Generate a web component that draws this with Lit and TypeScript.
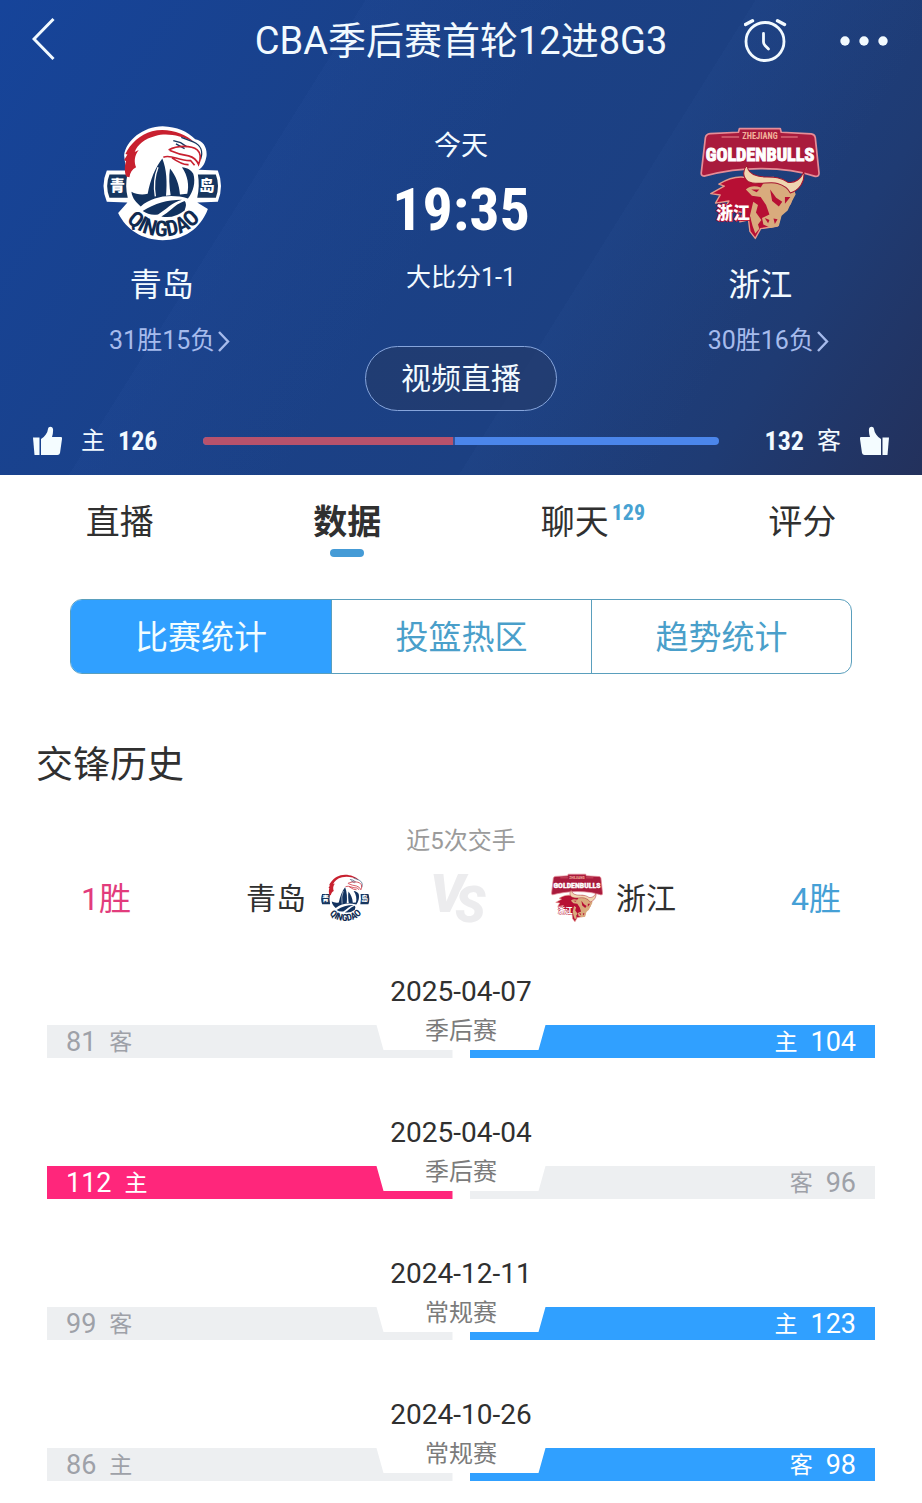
import { LitElement, html, svg, css, nothing } from "lit";
import { customElement, property, state } from "lit/decorators.js";
import { classMap } from "lit/directives/class-map.js";

type Team = "qingdao" | "zhejiang";

interface Meeting {
  date: string;
  stage: string;
  left: number;
  right: number;
  leftHome: boolean;
}

const MEETINGS: Meeting[] = [
  { date: "2025-04-07", stage: "季后赛", left: 81, right: 104, leftHome: false },
  { date: "2025-04-04", stage: "季后赛", left: 112, right: 96, leftHome: true },
  { date: "2024-12-11", stage: "常规赛", left: 99, right: 123, leftHome: false },
  { date: "2024-10-26", stage: "常规赛", left: 86, right: 98, leftHome: true },
];

@customElement("team-logo")
export class TeamLogo extends LitElement {
  @property() team: Team = "qingdao";

  static styles = css`
    :host { display: block; }
    svg { display: block; width: 100%; height: 100%; }
    .cjk { font-family: "Noto Sans CJK SC", sans-serif; font-weight: 900; }
    .latin { font-family: "Roboto Condensed", "Liberation Sans Narrow", Roboto, sans-serif; font-weight: 700; }
  `;

  private qingdao() {
    return svg`
      <defs><path id="banner" d="M90 296 Q134 364 218 366 Q304 364 350 290"/></defs>
      <path fill="#fff" d="M102 122 C108 78 158 36 218 35 C262 37 292 50 316 74 C342 80 352 100 350 124 C346 146 340 156 326 166 L384 168 Q403 214 384 262 L322 264 L354 284 C332 344 280 378 218 378 C156 376 110 348 84 296 L112 264 L50 262 Q30 214 50 168 L108 168 Z"/>
      <path fill="#17365f" d="M58 180 H112 Q104 214 113 250 H58 Q44 214 58 180 Z M324 180 H378 Q391 214 378 250 H322 Q330 214 324 180 Z"/>
      <text class="cjk" x="59" y="231" font-size="46" fill="#fff">青</text>
      <text class="cjk" x="328" y="231" font-size="46" fill="#fff">岛</text>
      <path fill="#c8202f" d="M108 186 C102 168 104 150 108 140 L102 136 L112 120 L106 118 C120 88 150 60 186 50 C232 38 286 56 312 82 C270 62 230 54 196 64 C164 72 142 90 134 112 L146 106 C132 124 132 142 138 158 C126 164 120 174 118 188 Z"/>
      <path fill="#fff" d="M146 124 C154 84 202 62 254 74 L286 92 L246 82 L268 104 C226 100 196 110 188 150 Z"/>
      <path fill="none" stroke="#17365f" stroke-width="4" d="M250 78 L272 84 L290 96 M258 88 L284 102 M274 68 L310 82 C334 92 340 112 332 134"/>
      <path fill="none" stroke="#c8202f" stroke-width="5" d="M236 106 C262 92 304 92 322 106 Q338 120 326 150 Q318 130 296 124 Q266 120 240 108 M220 128 C244 118 268 140 302 138 L314 152 M246 130 Q278 152 296 150"/>
      <path fill="#fff" d="M122 206 C126 176 142 156 164 144 L198 160 L280 162 C302 170 314 190 314 210 L306 250 L130 250 Z"/>
      <path fill="#12325f" d="M217 132 C196 158 181 196 173 238 C157 242 138 240 124 232 C126 252 140 266 152 276 C190 244 244 238 294 252 C310 234 318 202 310 178 C304 166 292 160 276 158 C294 184 298 212 292 238 L270 240 C268 210 258 184 240 162 C236 186 238 216 242 242 L228 244 C232 206 230 164 217 132 Z"/>
      <path fill="none" stroke="#fff" stroke-width="4" d="M204 158 Q188 198 196 246"/>
      <path fill="#12325f" d="M158 290 C196 266 230 256 276 256 C246 264 228 286 204 300 Q178 304 158 290 Z M284 260 Q292 268 284 288 Q252 314 214 306 C238 296 250 272 284 260 Z"/>
      <text class="latin" font-size="66" fill="#102a50"><textPath href="#banner" startOffset="50%" text-anchor="middle">QINGDAO</textPath></text>`;
  }

  private zhejiang() {
    return svg`
      <path fill="#a91b3d" stroke="#e58d97" stroke-width="5" stroke-linejoin="round" d="M44 182 Q34 182 36 170 L48 68 Q50 57 62 56 L146 52 L149 41 H270 L273 52 L362 57 Q372 58 374 68 L385 172 Q386 184 374 183 C330 168 270 160 212 160 C150 160 90 170 44 182 Z"/>
      <path stroke="#f08a8f" stroke-width="3" d="M96 66 H148 M272 66 H322"/>
      <text class="latin" x="210" y="73" font-size="25" fill="#f3b39b" text-anchor="middle">ZHEJIANG</text>
      <text class="latin" x="210" y="136" font-size="54" fill="#fff" stroke="#fff" stroke-width="3" text-anchor="middle">GOLDENBULLS</text>
      <path fill="#b70f34" stroke="#e79a8b" stroke-width="4" stroke-linejoin="round" d="M184 190 C150 178 120 186 88 206 L104 212 L64 234 L92 238 L78 262 L118 256 L104 280 L160 290 L150 318 L176 312 L180 346 L196 367 L212 338 L262 330 L274 288 L300 264 L312 224 L250 186 Z"/>
      <path fill="#d9ab7d" d="M168 222 Q186 206 212 216 L222 200 L262 194 C290 202 310 214 316 236 L302 262 L292 284 L274 300 L266 330 L242 336 L220 326 L216 306 L238 296 L228 268 L212 244 L186 240 Z M190 258 L204 268 L198 290 L214 312 L204 326 L208 338 L196 352 L188 330 L180 300 Z"/>
      <path fill="#b70f34" d="M184 222 L208 222 L200 230 Z M240 222 L258 246 L276 258 L266 272 L246 256 Z M284 244 L300 244 L284 264 Z M224 306 L238 312 L234 322 Z M250 308 L262 310 L254 324 Z"/>
      <path fill="#f0d5b0" stroke="#a4142f" stroke-width="3" stroke-linejoin="round" d="M172 148 C160 162 156 184 174 198 C200 212 240 196 262 204 Q290 212 300 232 C326 224 344 200 340 168 C332 192 312 204 292 200 C264 178 226 188 204 182 C184 178 172 166 172 148 Z"/>
      <text class="cjk" x="80" y="309" font-size="50" fill="#fff" stroke="#b70f34" stroke-width="5" paint-order="stroke">浙江</text>`;
  }

  render() {
    const isQingdao = this.team === "qingdao";
    return html`<svg role="img" aria-label=${isQingdao ? "青岛队徽" : "浙江队徽"}
      viewBox=${isQingdao ? "36 34 360 346" : "32 38 356 332"}>
      ${isQingdao ? this.qingdao() : this.zhejiang()}
    </svg>`;
  }
}

@customElement("team-summary")
export class TeamSummary extends LitElement {
  @property() team: Team = "qingdao";
  @property() name = "";
  @property() record = "";

  static styles = css`
    :host { display: flex; flex-direction: column; align-items: center; }
    .logo { width: 120px; height: 115px; }
    .name { margin-top: 22px; font-size: 32px; line-height: 44px; color: #f2faff; }
    .record {
      margin: 18px 0 0 16px; display: flex; align-items: center; gap: 2px;
      font-size: 25px; line-height: 32px; color: #a6bbec; text-decoration: none;
    }
    .arrow { display: block; width: 13px; height: 22px; }
  `;

  render() {
    return html`
      <team-logo class="logo" .team=${this.team}></team-logo>
      <div class="name">${this.name}</div>
      <a class="record" href="#record">${this.record}<svg class="arrow" viewBox="0 0 13 22" fill="none" stroke="currentColor" stroke-width="2.4" aria-hidden="true"><path d="M2 2 L11 11.500 L2 21"/></svg></a>
    `;
  }
}

@customElement("meeting-row")
export class MeetingRow extends LitElement {
  @property({ attribute: false }) meeting!: Meeting;

  static styles = css`
    :host {
      display: grid;
      grid-template-columns: 1fr 1fr;
      grid-template-rows: 40px 38px 8px;
      column-gap: 17px;
    }
    .date, .stage { grid-column: 1 / -1; text-align: center; }
    .date { grid-row: 1; font-size: 28px; line-height: 40px; color: #303030; }
    .stage { grid-row: 2; font-size: 24px; line-height: 38px; color: #7b7b7b; }
    .bar {
      grid-row: 2 / 4; align-self: end; height: 33px; box-sizing: border-box;
      display: flex; align-items: center; gap: 13px; padding: 2px 19px 0;
      background: #edeff1; color: #9ea1a8; font-size: 27px; line-height: 31px;
    }
    .left {
      grid-column: 1;
      clip-path: polygon(0 0, calc(100% - 76px) 0, calc(100% - 69px) 25px, 100% 25px, 100% 100%, 0 100%);
    }
    .right {
      grid-column: 2; flex-direction: row-reverse;
      clip-path: polygon(76px 0, 100% 0, 100% 100%, 0 100%, 0 25px, 69px 25px);
    }
    .side { font-size: 23px; }
    .left.win { background: #ff267b; color: #fff; }
    .right.win { background: #30a0ff; color: #fff; }
  `;

  render() {
    const m = this.meeting;
    return html`
      <div class="date">${m.date}</div>
      <div class=${classMap({ bar: true, left: true, win: m.left > m.right })}>
        <span>${m.left}</span><span class="side">${m.leftHome ? "主" : "客"}</span>
      </div>
      <div class=${classMap({ bar: true, right: true, win: m.right > m.left })}>
        <span>${m.right}</span><span class="side">${m.leftHome ? "客" : "主"}</span>
      </div>
      <div class="stage">${m.stage}</div>
    `;
  }
}

@customElement("app-root")
export class AppRoot extends LitElement {
  @state() private tab = 1;
  @state() private view = 0;

  private homeVotes = 126;
  private awayVotes = 132;

  static styles = css`
    :host {
      display: block; min-height: 100vh; background: #fff; color: #303030;
      font-family: Roboto, "Noto Sans CJK SC", sans-serif;
    }
    button { font: inherit; color: inherit; background: none; border: 0; padding: 0; cursor: pointer; }
    svg { display: block; }

    .hero {
      padding-bottom: 18px; color: #f2faff;
      background:
        linear-gradient(122deg, transparent 30%, rgba(50, 90, 170, 0.1) 30%, transparent 48%),
        linear-gradient(122deg, transparent 62%, rgba(50, 90, 160, 0.1) 62%, transparent 78%),
        linear-gradient(122deg, #16449a 0%, #1a4189 35%, #1c4082 62%, #1f3b73 82%, #23315c 100%);
    }
    .nav {
      display: grid; grid-template-columns: 1fr auto 1fr; align-items: center;
      height: 81px; padding: 0 32px;
    }
    .title { margin: 0; font-size: 38px; font-weight: 400; line-height: 52px; }
    .actions { display: flex; justify-content: flex-end; align-items: center; gap: 52px; }

    .match { display: grid; grid-template-columns: repeat(3, 1fr); padding: 0 12px; }
    .team { padding-top: 45px; }
    .center { display: flex; flex-direction: column; align-items: center; padding-top: 47px; }
    .day { font-size: 27px; line-height: 36px; }
    .time {
      margin-top: 14px; font-size: 60px; line-height: 64px; font-weight: 700; color: #fff;
      font-family: "Roboto Condensed", "Liberation Sans Narrow", Roboto, sans-serif;
    }
    .series { margin-top: 18px; font-size: 25px; line-height: 36px; }
    .live {
      margin-top: 50px; height: 65px; padding: 0 35px; box-sizing: border-box;
      border: 1px solid #86a5dc; border-radius: 33px; background: rgba(36, 58, 104, 0.6);
      font-size: 30px; line-height: 44px;
    }

    .votes { display: flex; align-items: center; height: 32px; margin-top: 14px; padding: 0 33px; }
    .vote { display: flex; align-items: center; font-size: 24px; line-height: 32px; }
    .vote .side { margin: 0 13px 0 19px; }
    .vote.away .side { margin: 0 19px 0 13px; }
    .count {
      font-size: 26px; font-weight: 700;
      font-family: "Roboto Condensed", "Liberation Sans Narrow", Roboto, sans-serif;
    }
    .meter {
      flex: 1; display: flex; height: 8px; margin: 0 46px; border-radius: 5px; overflow: hidden;
      background: #4b86eb;
    }
    .home-part { background: #b7526c; border-right: 2px solid #33559d; box-sizing: border-box; }

    .tabs { display: grid; grid-template-columns: repeat(4, 1fr); padding: 22px 6px 0; }
    .tab { display: flex; flex-direction: column; align-items: center; font-size: 34px; line-height: 50px; }
    .label { position: relative; }
    .badge {
      position: absolute; left: calc(100% + 3px); top: 0;
      font-size: 22px; line-height: 32px; font-weight: 700; color: #47a2d2;
      font-family: "Roboto Condensed", "Liberation Sans Narrow", Roboto, sans-serif;
    }
    .mark { width: 34px; height: 8px; margin-top: 2px; border-radius: 4px; }
    .tab.active { font-weight: 700; }
    .tab.active .mark { background: #459bd6; }

    .segments {
      display: grid; grid-template-columns: repeat(3, 1fr); height: 75px;
      margin: 42px 70px 0; box-sizing: border-box; border: 1px solid #5a9fbd;
      border-radius: 12px; overflow: hidden;
    }
    .segment { padding-top: 2px; font-size: 33px; line-height: 48px; color: #4a9fca; }
    .segment + .segment { border-left: 1px solid #5a9fbd; }
    .segment.active { background: #30a0ff; color: #f2fdff; }

    .heading { margin: 68px 36px 0; font-size: 37px; line-height: 48px; font-weight: 400; }
    .recent { margin-top: 34px; text-align: center; font-size: 24px; line-height: 34px; color: #9b9b9b; }
    .compare {
      display: grid; grid-template-columns: 1fr auto 180px auto 1fr; grid-template-rows: 52px;
      align-items: center; margin-top: 14px; padding: 0 81px;
    }
    .wins { padding-top: 2px; font-size: 32px; line-height: 44px; color: #e23c7c; }
    .wins.away { color: #45a0d6; text-align: right; }
    .club { display: flex; align-items: center; gap: 13px; font-size: 30px; line-height: 44px; }
    .club-name { padding-top: 2px; }
    .club-logo { width: 52px; height: 50px; }
    .versus { justify-self: center; font-family: Roboto, sans-serif; font-weight: 900; font-style: italic; }

    .history {
      display: flex; flex-direction: column; gap: 55px;
      margin: 48px 0 0; padding: 0 47px 23px;
    }
  `;

  private thumb(mirrored: boolean) {
    return html`<svg width="29" height="30" viewBox="0 0 29 30" fill="#f4fcff" aria-hidden="true">
      <g transform=${mirrored ? "matrix(-1 0 0 1 29 0)" : "matrix(1 0 0 1 0 0)"}>
        <path d="M0 11.500 H6.500 V29 H1.500 Z"/>
        <path d="M8 13 C12 10.500 14.500 7 15 3 C15.300 0 19.500 0 20 3 C20.300 6 19.800 8.500 19 11 H28 Q29.300 11 29 13 L27 27 Q26.500 29 24.500 29 H8 Z"/>
      </g></svg>`;
  }

  render() {
    const share = (this.homeVotes / (this.homeVotes + this.awayVotes)) * 100;
    return html`
      <header class="hero">
        <div class="nav">
          <div>
            <button aria-label="返回">
              <svg width="24" height="44" viewBox="0 0 24 44" fill="none" stroke="#f2faff" stroke-width="3" aria-hidden="true"><path d="M21.500 2 L2 22 L21.500 42"/></svg>
            </button>
          </div>
          <h1 class="title">CBA季后赛首轮12进8G3</h1>
          <div class="actions">
            <button aria-label="提醒">
              <svg width="44" height="44" viewBox="0 0 44 44" fill="none" stroke="#f2faff" stroke-width="2.800" stroke-linecap="round" aria-hidden="true">
                <circle cx="21" cy="22.500" r="19"/><path d="M19.500 14.500 V23 Q19.500 25 21 26.500 L24.500 30"/>
                <path stroke-width="3.400" d="M1.500 5.500 L8.500 1.800 M40.500 5.500 L33.500 1.800"/>
              </svg>
            </button>
            <button aria-label="更多">
              <svg width="50" height="44" viewBox="0 0 50 44" fill="#f2faff" aria-hidden="true"><circle cx="5" cy="22" r="4.700"/><circle cx="24" cy="22" r="4.700"/><circle cx="43" cy="22" r="4.700"/></svg>
            </button>
          </div>
        </div>

        <div class="match">
          <team-summary class="team" team="qingdao" name="青岛" record="31胜15负"></team-summary>
          <div class="center">
            <div class="day">今天</div>
            <div class="time">19:35</div>
            <div class="series">大比分1-1</div>
            <button class="live">视频直播</button>
          </div>
          <team-summary class="team" team="zhejiang" name="浙江" record="30胜16负"></team-summary>
        </div>

        <div class="votes">
          <button class="vote">${this.thumb(false)}<span class="side">主</span><span class="count">${this.homeVotes}</span></button>
          <div class="meter"><div class="home-part" style="width:${share}%"></div></div>
          <button class="vote away"><span class="count">${this.awayVotes}</span><span class="side">客</span>${this.thumb(true)}</button>
        </div>
      </header>

      <nav class="tabs">
        ${["直播", "数据", "聊天", "评分"].map((label, i) => html`
          <button class=${classMap({ tab: true, active: i === this.tab })} @click=${() => (this.tab = i)}>
            <span class="label">${label}${i === 2 ? html`<span class="badge">129</span>` : nothing}</span>
            <span class="mark"></span>
          </button>`)}
      </nav>

      <main>
        <div class="segments">
          ${["比赛统计", "投篮热区", "趋势统计"].map((label, i) => html`
            <button class=${classMap({ segment: true, active: i === this.view })} @click=${() => (this.view = i)}>${label}</button>`)}
        </div>

        <h2 class="heading">交锋历史</h2>
        <div class="recent">近5次交手</div>
        <div class="compare">
          <div class="wins">1胜</div>
          <div class="club"><span class="club-name">青岛</span><team-logo class="club-logo" team="qingdao"></team-logo></div>
          <svg class="versus" width="80" height="80" viewBox="0 0 80 80" fill="#ececee" stroke="#fff" stroke-width="2" paint-order="stroke" role="img" aria-label="对阵">
            <text x="9" y="54" font-size="54">V<tspan x="34" y="64" font-size="50">S</tspan></text>
          </svg>
          <div class="club"><team-logo class="club-logo" team="zhejiang"></team-logo><span class="club-name">浙江</span></div>
          <div class="wins away">4胜</div>
        </div>

        <div class="history">
          ${MEETINGS.map((m) => html`<meeting-row .meeting=${m}></meeting-row>`)}
        </div>
      </main>
    `;
  }
}
